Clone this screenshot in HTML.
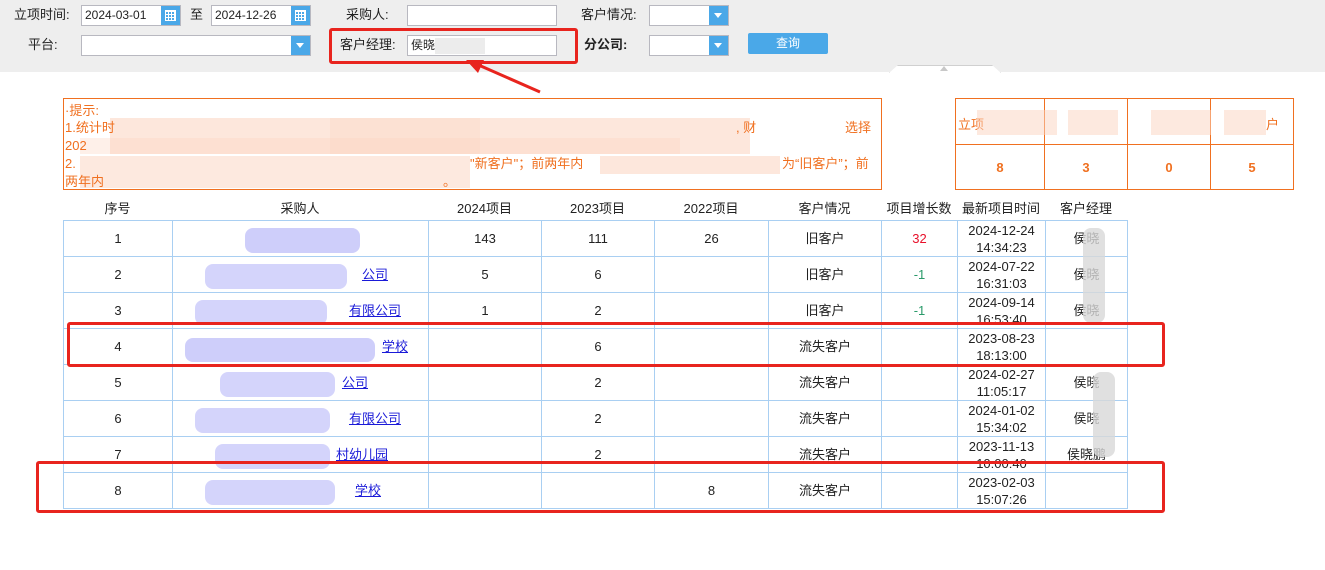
<!DOCTYPE html>
<html><head><meta charset="utf-8">
<style>
*{margin:0;padding:0;box-sizing:border-box}
body{width:1325px;height:570px;background:#fff;position:relative;overflow:hidden;font-family:"Liberation Sans","Noto Sans CJK SC",sans-serif;font-size:13px;color:#222}
.a{position:absolute}
.top{left:0;top:0;width:1325px;height:72px;background:#eeeeee}
.inp{position:absolute;height:21px;background:#fff;border:1px solid #b8b8c0;font-size:12px;line-height:19px;padding-left:3px}
.ic{position:absolute;top:0;right:0;width:19px;height:19px;background:#4aa8e8}
.lbl{position:absolute;font-size:13px;line-height:20px}
.cal{position:absolute;left:4px;top:4px;width:11px;height:11px;border:1px solid #fff;background:repeating-linear-gradient(90deg,transparent 0 2px,#fff 2px 3px),repeating-linear-gradient(0deg,transparent 0 2px,#fff 2px 3px)}
.arr{position:absolute;left:5px;top:7px;border-left:4.5px solid transparent;border-right:4.5px solid transparent;border-top:5px solid #fff}
table{border-collapse:collapse;position:absolute;left:63px;top:220px}
td{border:1px solid #a9cff2;height:36px;text-align:center;font-size:13px;line-height:17px;padding:0}
a{color:#1a1ad8;text-decoration:underline}
.red{position:absolute;border:3px solid #e8241e;border-radius:3px}
.blur{position:absolute;background:#c9c9fa;border-radius:8px;opacity:.9}
.pb{position:absolute;background:#fbd3c0}
.t{position:absolute;color:#f07020;font-size:13px;line-height:18px;white-space:nowrap}
</style></head><body>
<div class="a top"></div>
<div class="lbl" style="left:14px;top:5px">立项时间:</div>
<div class="inp" style="left:81px;top:5px;width:100px">2024-03-01<div class="ic"><div class="cal"></div></div></div>
<div class="lbl" style="left:190px;top:5px">至</div>
<div class="inp" style="left:211px;top:5px;width:100px">2024-12-26<div class="ic"><div class="cal"></div></div></div>
<div class="lbl" style="left:346px;top:5px">采购人:</div>
<div class="inp" style="left:407px;top:5px;width:150px"></div>
<div class="lbl" style="left:581px;top:5px">客户情况:</div>
<div class="inp" style="left:649px;top:5px;width:80px"><div class="ic"><div class="arr"></div></div></div>
<div class="lbl" style="left:28px;top:35px">平台:</div>
<div class="inp" style="left:81px;top:35px;width:230px"><div class="ic"><div class="arr"></div></div></div>
<div class="lbl" style="left:340px;top:35px">客户经理:</div>
<div class="inp" style="left:407px;top:35px;width:150px">侯晓<span style="display:inline-block;width:50px;height:16px;background:#ececec;vertical-align:middle"></span></div>
<div class="lbl" style="left:584px;top:35px;font-weight:bold">分公司:</div>
<div class="inp" style="left:649px;top:35px;width:80px"><div class="ic"><div class="arr"></div></div></div>
<div class="a" style="left:748px;top:33px;width:80px;height:21px;background:#4aa8e8;border-radius:2px;color:#fff;text-align:center;line-height:21px;font-size:12px">查询</div>
<div class="a" style="left:889px;top:65px;width:112px;height:8px;background:#fff;border:1px solid #d0d0d0;border-bottom:none;clip-path:polygon(8% 0,92% 0,100% 100%,0 100%)"></div>
<div class="a" style="left:940px;top:66px;border-left:4px solid transparent;border-right:4px solid transparent;border-bottom:5px solid #c8c8c8"></div>
<div class="red" style="left:329px;top:28px;width:249px;height:36px"></div>
<svg class="a" style="left:460px;top:55px" width="90" height="45"><line x1="80" y1="37" x2="14" y2="8" stroke="#e8241e" stroke-width="3"/><polygon points="6,5 24,5 18,18" fill="#e8241e"/></svg>

<div class="a" style="left:63px;top:98px;width:819px;height:92px;border:1px solid #f07020"></div>
<div class="pb" style="left:110px;top:118px;width:640px;height:36px;opacity:.55"></div>
<div class="pb" style="left:330px;top:118px;width:150px;height:36px;opacity:.3"></div>
<div class="pb" style="left:80px;top:138px;width:600px;height:16px;opacity:.35"></div>
<div class="pb" style="left:80px;top:156px;width:390px;height:32px;opacity:.5"></div>
<div class="pb" style="left:600px;top:156px;width:180px;height:18px;opacity:.55"></div>
<div class="t" style="left:65px;top:102px">·提示:</div>
<div class="t" style="left:65px;top:119px">1.统计时</div>
<div class="t" style="left:736px;top:119px">, 财</div>
<div class="t" style="left:845px;top:119px">选择</div>
<div class="t" style="left:65px;top:137px">202</div>
<div class="t" style="left:65px;top:155px">2.</div>
<div class="t" style="left:470px;top:155px">"新客户"；前两年内</div>
<div class="t" style="left:782px;top:155px">为“旧客户”；前</div>
<div class="t" style="left:65px;top:173px">两年内</div>
<div class="t" style="left:443px;top:173px">。</div>

<div class="a" style="left:955px;top:98px;width:339px;height:92px;border:1px solid #f07020"></div>
<div class="a" style="left:955px;top:144px;width:339px;height:1px;background:#f07020"></div>
<div class="a" style="left:1044px;top:98px;width:1px;height:92px;background:#f07020"></div>
<div class="a" style="left:1127px;top:98px;width:1px;height:92px;background:#f07020"></div>
<div class="a" style="left:1210px;top:98px;width:1px;height:92px;background:#f07020"></div>
<div class="a" style="left:958px;top:114px;color:#f07020">立项</div>
<div class="a" style="left:1266px;top:114px;color:#f07020">户</div>
<div class="pb" style="left:977px;top:110px;width:80px;height:25px;opacity:.5"></div>
<div class="pb" style="left:1068px;top:110px;width:50px;height:25px;opacity:.5"></div>
<div class="pb" style="left:1151px;top:110px;width:60px;height:25px;opacity:.5"></div>
<div class="pb" style="left:1224px;top:110px;width:42px;height:25px;opacity:.5"></div>
<div class="a" style="left:955px;top:160px;width:90px;text-align:center;color:#f07020;font-weight:bold">8</div>
<div class="a" style="left:1044px;top:160px;width:84px;text-align:center;color:#f07020;font-weight:bold">3</div>
<div class="a" style="left:1127px;top:160px;width:84px;text-align:center;color:#f07020;font-weight:bold">0</div>
<div class="a" style="left:1210px;top:160px;width:84px;text-align:center;color:#f07020;font-weight:bold">5</div>

<div class="a" style="left:63px;top:198px;width:1064px;height:18px;font-size:13px">
<span class="a" style="left:0;width:109px;text-align:center">序号</span>
<span class="a" style="left:109px;width:256px;text-align:center">采购人</span>
<span class="a" style="left:365px;width:113px;text-align:center">2024项目</span>
<span class="a" style="left:478px;width:113px;text-align:center">2023项目</span>
<span class="a" style="left:591px;width:114px;text-align:center">2022项目</span>
<span class="a" style="left:705px;width:113px;text-align:center">客户情况</span>
<span class="a" style="left:818px;width:76px;text-align:center;white-space:nowrap">项目增长数</span>
<span class="a" style="left:894px;width:88px;text-align:center;white-space:nowrap">最新项目时间</span>
<span class="a" style="left:982px;width:82px;text-align:center">客户经理</span>
</div>

<table>
<colgroup><col style="width:109px"><col style="width:256px"><col style="width:113px"><col style="width:113px"><col style="width:114px"><col style="width:113px"><col style="width:76px"><col style="width:88px"><col style="width:82px"></colgroup>
<tr><td>1</td><td></td><td>143</td><td>111</td><td>26</td><td>旧客户</td><td style="color:#e8102a">32</td><td>2024-12-24<br>14:34:23</td><td>侯晓</td></tr>
<tr><td>2</td><td style="text-align:right;padding-right:40px"><a>公司</a></td><td>5</td><td>6</td><td></td><td>旧客户</td><td style="color:#2a9a6a">-1</td><td>2024-07-22<br>16:31:03</td><td>侯晓</td></tr>
<tr><td>3</td><td style="text-align:right;padding-right:27px"><a>有限公司</a></td><td>1</td><td>2</td><td></td><td>旧客户</td><td style="color:#2a9a6a">-1</td><td>2024-09-14<br>16:53:40</td><td>侯晓</td></tr>
<tr><td>4</td><td style="text-align:right;padding-right:20px"><a>学校</a></td><td></td><td>6</td><td></td><td>流失客户</td><td></td><td>2023-08-23<br>18:13:00</td><td></td></tr>
<tr><td>5</td><td style="text-align:right;padding-right:60px"><a>公司</a></td><td></td><td>2</td><td></td><td>流失客户</td><td></td><td>2024-02-27<br>11:05:17</td><td>侯晓</td></tr>
<tr><td>6</td><td style="text-align:right;padding-right:27px"><a>有限公司</a></td><td></td><td>2</td><td></td><td>流失客户</td><td></td><td>2024-01-02<br>15:34:02</td><td>侯晓</td></tr>
<tr><td>7</td><td style="text-align:right;padding-right:40px"><a>村幼儿园</a></td><td></td><td>2</td><td></td><td>流失客户</td><td></td><td>2023-11-13<br>10:00:40</td><td>侯晓鹏</td></tr>
<tr><td>8</td><td style="text-align:right;padding-right:47px"><a>学校</a></td><td></td><td></td><td>8</td><td>流失客户</td><td></td><td>2023-02-03<br>15:07:26</td><td></td></tr>
</table>
<div class="blur" style="left:245px;top:228px;width:115px;height:25px"></div>
<div class="blur" style="left:205px;top:264px;width:142px;height:25px;opacity:.8"></div>
<div class="blur" style="left:195px;top:300px;width:132px;height:25px;opacity:.8"></div>
<div class="blur" style="left:185px;top:338px;width:190px;height:24px"></div>
<div class="blur" style="left:220px;top:372px;width:115px;height:25px;opacity:.8"></div>
<div class="blur" style="left:195px;top:408px;width:135px;height:25px;opacity:.8"></div>
<div class="blur" style="left:215px;top:444px;width:115px;height:25px;opacity:.8"></div>
<div class="blur" style="left:205px;top:480px;width:130px;height:25px;opacity:.8"></div>
<div class="a" style="left:1083px;top:228px;width:22px;height:95px;background:#d8d8d8;border-radius:8px;opacity:.8"></div>
<div class="a" style="left:1093px;top:372px;width:22px;height:85px;background:#d8d8d8;border-radius:8px;opacity:.8"></div>
<div class="red" style="left:67px;top:322px;width:1098px;height:45px"></div>
<div class="red" style="left:36px;top:461px;width:1129px;height:52px"></div>
</body></html>
